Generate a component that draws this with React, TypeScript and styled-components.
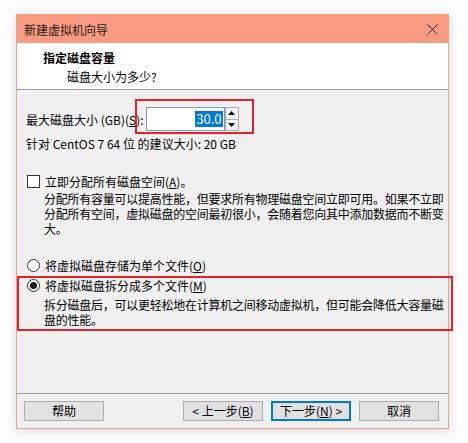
import styled, { createGlobalStyle } from 'styled-components';

const GlobalStyle = createGlobalStyle`
  html, body {
    margin: 0;
    padding: 0;
    background: #fdfdfd;
  }
  body {
    font-family: "Noto Sans CJK SC", "Noto Sans", sans-serif;
    font-size: 12px;
    color: #000;
  }
`;

const Page = styled.div`
  width: 468px;
  height: 443px;
  padding: 14px 0 0 16px;
  box-sizing: border-box;
`;

const Window = styled.div`
  width: 431px;
  border: 1px solid #eba18d;
  box-shadow: 0 2px 10px rgba(0, 0, 0, 0.14);
  background: #f0f0f0;
  display: flex;
  flex-direction: column;
`;

const TitleBar = styled.div`
  height: 28px;
  background: #fa9a80;
  display: flex;
  align-items: center;
  justify-content: space-between;
  padding: 0 10px 0 7px;
`;

const Title = styled.span`
  font-size: 12px;
  color: #1a1a1a;
`;

const Header = styled.div`
  height: 47px;
  background: #fff;
  border-bottom: 1px solid #a0a0a0;
  padding: 7px 0 0 26px;
  box-sizing: border-box;
  display: flex;
  flex-direction: column;
  gap: 3px;
`;

const HeaderTitle = styled.div`
  font-weight: bold;
  line-height: 16px;
`;

const HeaderSub = styled.div`
  padding-left: 24px;
  line-height: 16px;
`;

const Body = styled.div`
  position: relative;
  height: 303px;
  padding: 17px 0 0 9px;
  box-sizing: border-box;
  display: flex;
  flex-direction: column;
`;

const SizeRow = styled.div`
  display: flex;
  align-items: center;
  height: 24px;
`;

const Label = styled.span`
  line-height: 15px;
  white-space: nowrap;
`;

const U = styled.span`
  text-decoration: underline;
`;

const SpinWrap = styled.div`
  position: relative;
  display: flex;
  margin-left: 2px;
  height: 24px;
`;

const SpinInput = styled.div`
  width: 76px;
  height: 22px;
  border: 1px solid #7a9cc6;
  background: #fff;
  display: flex;
  align-items: center;
  justify-content: flex-end;
  padding-right: 1px;
  font-size: 13px;
`;

const Selected = styled.span`
  background: #0078d7;
  color: #fff;
  line-height: 16px;
  padding: 0 1px;
`;

const SpinButtons = styled.div`
  display: flex;
  flex-direction: column;
  width: 14px;
  height: 24px;
`;

const SpinBtn = styled.div`
  flex: 1;
  background: #f4f4f4;
  border: 1px solid #adadad;
  display: flex;
  align-items: center;
  justify-content: center;
  & + & {
    border-top: none;
  }
`;

const Mark = styled.div`
  position: absolute;
  border: 2px solid #e62128;
  pointer-events: none;
`;

const SizeMark = styled(Mark)`
  left: -11px;
  top: -8px;
  width: 115px;
  height: 31px;
`;

const SplitMark = styled(Mark)`
  left: 0;
  right: -5px;
  top: 186px;
  height: 51px;
`;

const Line = styled.div<{ $top?: number }>`
  line-height: 15px;
  margin-top: ${(p) => p.$top ?? 0}px;
  white-space: nowrap;
`;

const OptionRow = styled.div<{ $top: number }>`
  display: flex;
  align-items: center;
  gap: 5px;
  margin-top: ${(p) => p.$top}px;
  line-height: 15px;
`;

const Box = styled.span`
  width: 11px;
  height: 11px;
  border: 1px solid #333;
  background: #fff;
  margin-left: 1px;
`;

const Radio = styled.span<{ $on?: boolean }>`
  width: 11px;
  height: 11px;
  border: 1px solid #333;
  border-radius: 50%;
  background: #fff;
  margin-left: 1px;
  display: flex;
  align-items: center;
  justify-content: center;
  &::after {
    content: '';
    width: 7px;
    height: 7px;
    border-radius: 50%;
    background: ${(p) => (p.$on ? '#1a1a1a' : 'transparent')};
  }
`;

const Desc = styled.div<{ $top: number }>`
  margin-top: ${(p) => p.$top}px;
  padding-left: 18px;
  line-height: 15px;
  letter-spacing: -0.25px;
  white-space: nowrap;
`;

const Footer = styled.div`
  height: 35px;
  border-top: 1px solid #a0a0a0;
  display: flex;
  align-items: center;
  padding: 0 7px;
  box-sizing: border-box;
`;

const Button = styled.button<{ $primary?: boolean; $gap?: number }>`
  width: 80px;
  height: 20px;
  margin-left: ${(p) => p.$gap ?? 0}px;
  padding: 0;
  background: #e1e1e1;
  border: 1px solid ${(p) => (p.$primary ? '#0078d7' : '#adadad')};
  box-shadow: ${(p) => (p.$primary ? 'inset 0 0 0 1px #0078d7' : 'none')};
  font-family: inherit;
  font-size: 12px;
  color: #000;
  line-height: 16px;
`;

const CloseIcon = () => (
  <svg width="11" height="11" viewBox="0 0 11 11">
    <path d="M0.5 0.5L10.5 10.5M10.5 0.5L0.5 10.5" stroke="#111" strokeWidth="1" />
  </svg>
);

const Arrow = ({ up }: { up?: boolean }) => (
  <svg width="7" height="4" viewBox="0 0 7 4">
    <path d={up ? 'M3.5 0L7 4H0Z' : 'M0 0H7L3.5 4Z'} fill="#111" />
  </svg>
);

export default function App() {
  return (
    <Page>
      <GlobalStyle />
      <Window>
        <TitleBar>
          <Title>新建虚拟机向导</Title>
          <CloseIcon />
        </TitleBar>
        <Header>
          <HeaderTitle>指定磁盘容量</HeaderTitle>
          <HeaderSub>磁盘大小为多少?</HeaderSub>
        </Header>
        <Body>
          <SizeRow>
            <Label>
              最大磁盘大小 (GB)(<U>S</U>):
            </Label>
            <SpinWrap>
              <SizeMark />
              <SpinInput>
                <Selected>30.0</Selected>
              </SpinInput>
              <SpinButtons>
                <SpinBtn>
                  <Arrow up />
                </SpinBtn>
                <SpinBtn>
                  <Arrow />
                </SpinBtn>
              </SpinButtons>
            </SpinWrap>
          </SizeRow>
          <Line $top={5}>针对 CentOS 7 64 位 的建议大小: 20 GB</Line>

          <OptionRow $top={23}>
            <Box />
            <span>
              立即分配所有磁盘空间(<U>A</U>)。
            </span>
          </OptionRow>
          <Desc $top={2}>
            分配所有容量可以提高性能，但要求所有物理磁盘空间立即可用。如果不立即
            <br />
            分配所有空间，虚拟磁盘的空间最初很小，会随着您向其中添加数据而不断变
            <br />
            大。
          </Desc>

          <OptionRow $top={22}>
            <Radio />
            <span>
              将虚拟磁盘存储为单个文件(<U>O</U>)
            </span>
          </OptionRow>
          <OptionRow $top={5}>
            <Radio $on />
            <span>
              将虚拟磁盘拆分成多个文件(<U>M</U>)
            </span>
          </OptionRow>
          <Desc $top={4}>
            拆分磁盘后，可以更轻松地在计算机之间移动虚拟机，但可能会降低大容量磁
            <br />
            盘的性能。
          </Desc>
          <SplitMark />
        </Body>
        <Footer>
          <Button>帮助</Button>
          <Button $gap={79}>
            &lt; 上一步(<U>B</U>)
          </Button>
          <Button $primary $gap={8}>
            下一步(<U>N</U>) &gt;
          </Button>
          <Button $gap={8}>取消</Button>
        </Footer>
      </Window>
    </Page>
  );
}
